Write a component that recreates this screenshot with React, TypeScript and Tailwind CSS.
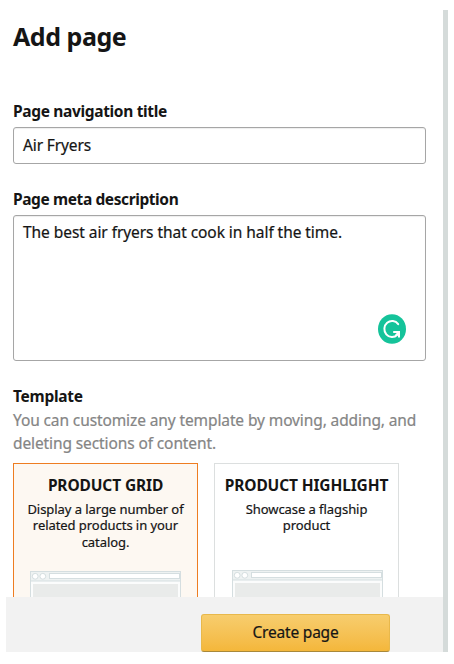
type TemplateCardProps = {
  title: string;
  lines: string[];
  selected?: boolean;
};

function BrowserPreview({ selected }: { selected?: boolean }) {
  return (
    <svg
      width="151"
      height="60"
      viewBox="0 0 151 60"
      className={`absolute ${selected ? "top-[107px] left-4" : "top-[106px] left-[17px]"}`}
      fill="none"
      stroke="#d5dee0"
    >
      <rect x="0.5" y="0.5" width="150" height="70" fill="#fbfcfc" />
      <rect x="1" y="1" width="149" height="9" fill="#eef2f2" stroke="none" />
      <path d="M0.5 10h150" />
      <circle cx="5.2" cy="5.3" r="2.9" fill="#fff" />
      <circle cx="12.8" cy="5.3" r="2.9" fill="#fff" />
      <rect x="19.5" y="2.5" width="130" height="5" fill="#fff" />
      <rect x="3" y="13" width="145" height="50" fill="#e9ebea" stroke="none" />
    </svg>
  );
}

function TemplateCard({ title, lines, selected }: TemplateCardProps) {
  return (
    <div
      className={`relative h-[135px] w-[185px] shrink-0 overflow-hidden border-x border-t pt-[11px] text-center ${
        selected ? "border-[#ee7d22] bg-[#fdf8f2]" : "border-[#dcdfdf] bg-white"
      }`}
    >
      <h3 className="text-[15.5px] leading-5 font-bold tracking-[-0.13px] whitespace-nowrap">{title}</h3>
      <div className="mt-[6px] text-[13px] leading-[16.3px] tracking-[-0.06px] [-webkit-text-stroke:0.2px]">
        {lines.map((line) => (
          <p key={line} className="whitespace-nowrap">
            {line}
          </p>
        ))}
      </div>
      <BrowserPreview selected={selected} />
    </div>
  );
}

function AssistantBadge() {
  return (
    <svg
      width="30"
      height="30"
      viewBox="0 0 30 30"
      className="absolute right-[18px] bottom-[16px]"
      fill="none"
      stroke="#fff"
      strokeWidth="2"
    >
      <ellipse cx="15" cy="15" rx="14" ry="14.8" fill="#15c39a" stroke="none" />
      <path d="M21.2 10.2A7.7 8 0 1 0 20.4 20.8" strokeLinecap="round" />
      <path d="M16.2 18H22V23.6" strokeLinejoin="miter" />
      <path d="M21.6 18.3L18.9 21.3" />
    </svg>
  );
}

export default function App() {
  return (
    <div className="h-[664px] w-[454px] overflow-hidden bg-white pt-[10px] pl-[6px] font-['Noto_Sans','Open_Sans',sans-serif] text-[#151515]">
      <div className="flex h-[642px] w-[442px]">
        <div className="flex w-[436.5px] shrink-0 flex-col">
          <main className="h-[587px] overflow-hidden pl-[7px]">
            <h1 className="pt-[10px] text-[25px] leading-8 font-bold tracking-[-0.45px]">Add page</h1>

            <label className="mt-[49px] block text-[15.5px] leading-5 font-bold tracking-[-0.34px]">
              Page navigation title
            </label>
            <div className="mt-[6px] h-[37px] w-[413px] rounded-[3px] border border-[#a6a6a6] pl-[9px] text-[15.5px] leading-[34px] tracking-[-0.13px] shadow-[inset_0_1px_1px_#00000012] [-webkit-text-stroke:0.2px]">
              Air Fryers
            </div>

            <label className="mt-[25px] block text-[15.5px] leading-5 font-bold tracking-[-0.4px]">
              Page meta description
            </label>
            <div className="relative mt-[6px] h-[146px] w-[413px] rounded-[3px] border border-[#a6a6a6] pt-[5px] pl-[9px] text-[15.5px] leading-[22px] tracking-[-0.06px] shadow-[inset_0_1px_1px_#00000012] [-webkit-text-stroke:0.2px]">
              The best air fryers that cook in half the time.
              <AssistantBadge />
            </div>

            <h2 className="mt-[25px] text-[15.5px] leading-5 font-bold tracking-[-0.27px]">Template</h2>
            <p className="mt-[3px] text-[15.5px] leading-[23px] tracking-[-0.11px] whitespace-nowrap text-[#858585] [-webkit-text-stroke:0.2px]">
              You can customize any template by moving, adding, and
              <br />
              deleting sections of content.
            </p>

            <div className="mt-[8px] flex gap-4">
              <TemplateCard
                selected
                title="PRODUCT GRID"
                lines={["Display a large number of", "related products in your", "catalog."]}
              />
              <TemplateCard title="PRODUCT HIGHLIGHT" lines={["Showcase a flagship", "product"]} />
            </div>
          </main>

          <footer className="flex h-[55px] items-end bg-[#f2f2f2] pl-[195px]">
            <button className="h-[38px] w-[189px] rounded-[3px] border border-[#e8b84b] border-b-[#a8883a] bg-linear-to-b from-[#f7cd6d] to-[#f4b73a] pb-[2px] text-[15.5px] leading-[33px] tracking-[-0.2px] text-[#151515] [-webkit-text-stroke:0.2px]">
              Create page
            </button>
          </footer>
        </div>
        <div className="grow bg-[#d5dbda]" />
      </div>
    </div>
  );
}
